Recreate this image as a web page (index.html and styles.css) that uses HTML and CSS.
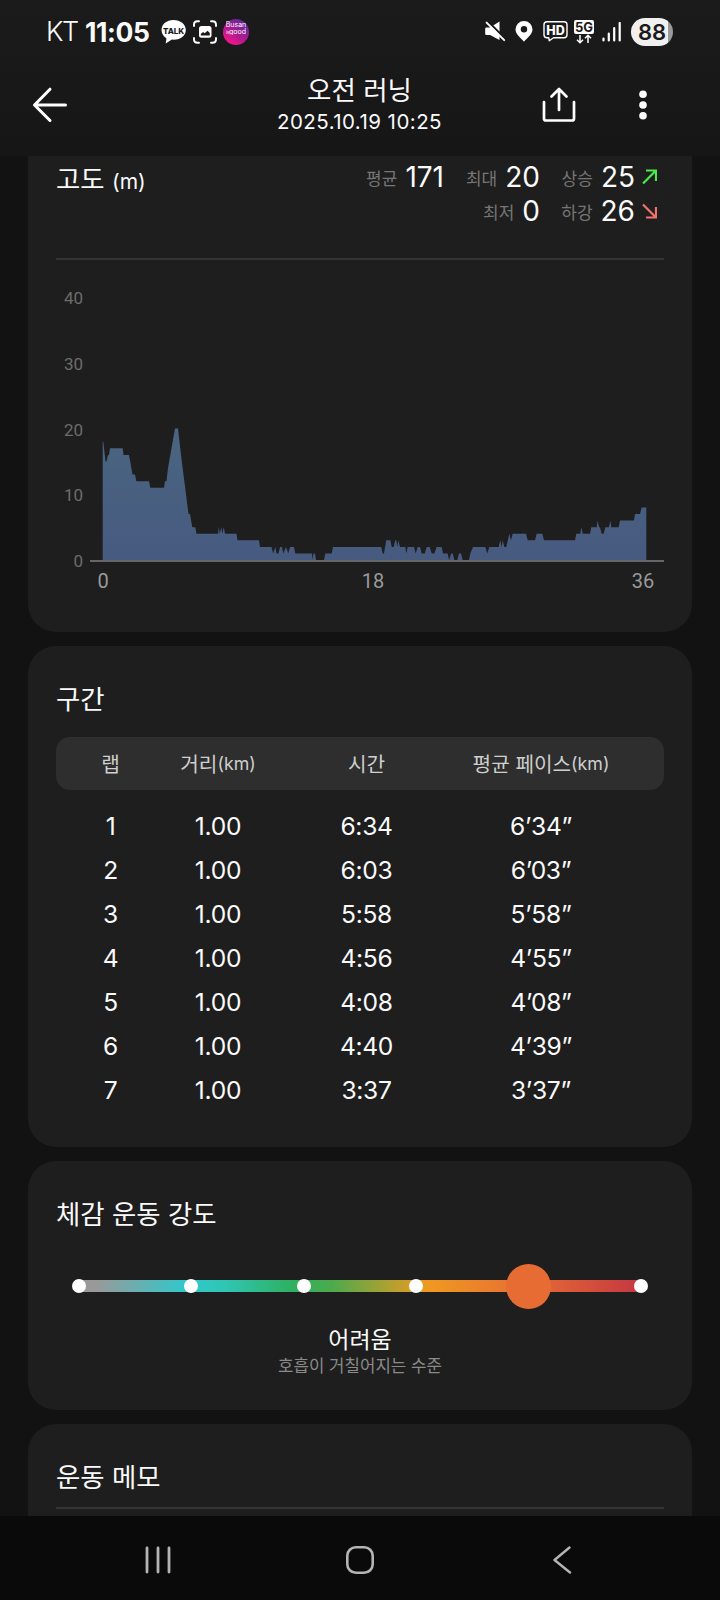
FILE: index.html
```html
<!DOCTYPE html>
<html lang="ko">
<head>
  <meta charset="UTF-8">
  <meta name="viewport" content="width=device-width, initial-scale=1.0">
  <title>오전 러닝</title>
  <link rel="stylesheet" href="styles.css">
</head>
<body>
  <div class="screen">
    <header class="top">
      <div class="status-bar">
        <div class="status-left">
          <span class="carrier">KT</span>
          <span class="clock">11:05</span>
          <svg class="icon-talk" width="25" height="24" viewBox="0 0 25 24">
            <path d="M12.500 0C5.600 0 0.500 4.300 0.500 10c0 3.600 2 6.600 5 8.400L4.700 23.500l6.200-3.900c9 .6 13.900-4 13.900-9.600C24.800 4.300 19.400 0 12.500 0z" fill="#fff"/>
            <text x="12.600" y="13.600" text-anchor="middle" class="talk-text">TALK</text>
          </svg>
          <svg class="icon-capture" width="24" height="24" viewBox="0 0 24 24">
            <path d="M1 6V4.500Q1 1.200 4.500 1.200H6M18 1.200h1.500Q23 1.200 23 4.500V6M23 18v1.500q0 3.300-3.500 3.300H18M6 22.800H4.500Q1 22.800 1 19.500V18" fill="none" stroke="#fff" stroke-width="1.900" stroke-linecap="round"/>
            <rect x="6" y="6" width="12.500" height="11.800" rx="2.500" fill="#fff"/>
            <path d="M7.800 15.500v-1.500l2.300-2 1.500 1.200 3-2.500 2.200 2.300v2.500z" fill="#1a1a1a"/>
          </svg>
          <div class="busan"><span>Busan</span><span><small>is</small>good</span></div>
        </div>
        <div class="status-right">
          <svg class="icon-mute" width="21" height="21" viewBox="0 0 21 21">
            <path d="M1.500 6.500h3.500l9.500-6v18.500L5 14H1.500Q.2 14 .2 12.700V7.800Q.2 6.500 1.500 6.500z" fill="#fff"/>
            <path d="M3.200.8l18 18" stroke="#1a1a1a" stroke-width="2.200"/>
            <path d="M1.600 1.600l17.600 17.600" stroke="#fff" stroke-width="1.900" stroke-linecap="round"/>
          </svg>
          <svg class="icon-pin" width="18" height="21" viewBox="0 0 18 21">
            <path d="M9 0a8.500 8.500 0 0 0-8.500 8.500C.5 13.500 6 17 9 20.700c3-3.700 8.500-7.200 8.500-12.200A8.500 8.500 0 0 0 9 0z" fill="#fff"/>
            <circle cx="9" cy="8.300" r="3.200" fill="#1a1a1a"/>
          </svg>
          <svg class="icon-hd" width="25" height="21" viewBox="0 0 25 21">
            <path d="M4 .8h17q3 0 3 3v10q0 3-3 3H10.500L6.300 19.800 5.800 16.800H4q-3 0-3-3v-10q0-3 3-3z" fill="none" stroke="#fff" stroke-width="1.400" stroke-linejoin="round"/>
            <text x="12.500" y="13.500" text-anchor="middle" class="hd-text">HD</text>
          </svg>
          <svg class="icon-5g" width="20" height="24" viewBox="0 0 20 24">
            <rect x="0" y="0" width="20" height="14" rx="2" fill="#fff"/>
            <text x="10" y="11.900" text-anchor="middle" class="g5-text">5G</text>
            <path d="M6 15v7.500M3 19.800l3 3 3-3M14 23v-7.500M11 18.200l3-3 3 3" fill="none" stroke="#fff" stroke-width="1.500"/>
          </svg>
          <svg class="icon-signal" width="20" height="20" viewBox="0 0 20 20">
            <path d="M1.500 16.500v2M6.800 11.500v7M12.200 6v12.500M17.700 1v17.500" stroke="#fff" stroke-width="2.200" stroke-linecap="round"/>
          </svg>
          <div class="battery">88</div>
        </div>
      </div>
      <div class="app-bar">
        <svg class="icon-back" width="36" height="36" viewBox="0 0 36 36">
          <path d="M18 2.200L2.500 18 18 33.500M2.500 18H33.500" fill="none" stroke="#fff" stroke-width="3" stroke-linecap="round" stroke-linejoin="round"/>
        </svg>
        <div class="title">
          <h1>오전 러닝</h1>
          <p>2025.10.19 10:25</p>
        </div>
        <div class="actions">
          <svg width="34" height="36" viewBox="0 0 34 36">
            <path d="M2 15v16.500q0 2 2 2h26q2 0 2-2V15M17 23V2.500M9.500 9.500L17 2l7.500 7.500" fill="none" stroke="#fff" stroke-width="2.700" stroke-linecap="round" stroke-linejoin="round"/>
          </svg>
          <svg width="8" height="30" viewBox="0 0 8 30">
            <circle cx="4" cy="4.300" r="3.800" fill="#fff"/>
            <circle cx="4" cy="15" r="3.800" fill="#fff"/>
            <circle cx="4" cy="25.700" r="3.800" fill="#fff"/>
          </svg>
        </div>
      </div>
    </header>

    <main class="content">
      <section class="card altitude">
        <div class="altitude-head">
          <h2>고도 <small>(m)</small></h2>
          <div class="stats">
            <div class="stat"><span class="label">평균</span><span class="num">171</span></div>
            <div class="stat"><span class="label">최대</span><span class="num">20</span></div>
            <div class="stat"><span class="label">상승</span><span class="num">25</span></div>
            <svg width="15" height="16" viewBox="0 0 15 16"><path d="M1 14.500L13.500 2M4 1.500h10v10.500" fill="none" stroke="#4be84b" stroke-width="2.200"/></svg>
            <div class="stat second"><span class="label">최저</span><span class="num">0</span></div>
            <div class="stat"><span class="label">하강</span><span class="num">26</span></div>
            <svg width="15" height="16" viewBox="0 0 15 16"><path d="M1 1.500L13.500 14M4 14.500h10V4" fill="none" stroke="#f0726a" stroke-width="2.200"/></svg>
          </div>
        </div>
        <div class="chart">
          <div class="y-axis">
            <span>40</span><span>30</span><span>20</span><span>10</span><span>0</span>
          </div>
          <svg class="plot" width="574" height="266" viewBox="90 0 574 266">
            <defs>
              <linearGradient id="fill" x1="0" y1="0" x2="0" y2="1">
                <stop offset="0" stop-color="#4a6580"/>
                <stop offset="1" stop-color="#475a80"/>
              </linearGradient>
            </defs>
            <polygon id="area" fill="url(#fill)"/>
            <path d="M90 264h574" stroke="#66666a" stroke-width="2"/>
          </svg>
        </div>
        <div class="x-axis"><span>0</span><span>18</span><span>36</span></div>
      </section>

      <section class="card laps">
        <h2>구간</h2>
        <div class="row head">
          <span>랩</span><span>거리<small>(km)</small></span><span>시간</span><span>평균 페이스<small>(km)</small></span>
        </div>
        <div class="rows">
          <div class="row"><span>1</span><span>1.00</span><span>6:34</span><span>6’34”</span></div>
          <div class="row"><span>2</span><span>1.00</span><span>6:03</span><span>6’03”</span></div>
          <div class="row"><span>3</span><span>1.00</span><span>5:58</span><span>5’58”</span></div>
          <div class="row"><span>4</span><span>1.00</span><span>4:56</span><span>4’55”</span></div>
          <div class="row"><span>5</span><span>1.00</span><span>4:08</span><span>4’08”</span></div>
          <div class="row"><span>6</span><span>1.00</span><span>4:40</span><span>4’39”</span></div>
          <div class="row"><span>7</span><span>1.00</span><span>3:37</span><span>3’37”</span></div>
        </div>
      </section>

      <section class="card effort">
        <h2>체감 운동 강도</h2>
        <div class="slider">
          <i></i><i></i><i></i><i></i><i class="thumb"></i><i></i>
        </div>
        <p class="level">어려움</p>
        <p class="desc">호흡이 거칠어지는 수준</p>
      </section>

      <section class="card memo">
        <h2>운동 메모</h2>
      </section>
    </main>

    <nav class="nav-bar">
      <svg width="28" height="28" viewBox="0 0 28 28"><path d="M3 2v24M14 2v24M25 2v24" stroke="#b4b4b4" stroke-width="2.800" stroke-linecap="round"/></svg>
      <svg width="28" height="28" viewBox="0 0 28 28"><rect x="1.300" y="1.300" width="25.400" height="25.400" rx="8.500" fill="none" stroke="#b4b4b4" stroke-width="2.600"/></svg>
      <svg width="28" height="28" viewBox="-5 0 28 28"><path d="M16.500 1.500L1.500 14l15.500 12.500" fill="none" stroke="#b4b4b4" stroke-width="2.400" stroke-linecap="round" stroke-linejoin="round"/></svg>
    </nav>
  </div>

  <script>
    // x position, altitude in meters
    const points = [
      [102.7, 0], [102.7, 18], [103.3, 18], [105.5, 15], [106.5, 15], [108, 16], [109, 16], [110, 17],
      [122.7, 17], [123.5, 16], [129, 16], [132.5, 13], [135, 13], [136.3, 12], [149, 12], [150.3, 11],
      [164, 11], [165, 12], [166.5, 12], [168, 14], [175, 20], [178, 20], [181, 16], [185, 11.2],
      [188.5, 7], [190, 7], [192.3, 5], [195.3, 5], [196.5, 4], [218, 4], [218.8, 5], [219.8, 4],
      [221.3, 5], [222.3, 4], [223.8, 5], [225, 4], [236.5, 4], [237.5, 3], [259, 3], [260, 2],
      [271.5, 2], [273.2, 1], [275.3, 2], [276.5, 1], [278.5, 1], [280, 2], [282, 2], [283.3, 1],
      [286, 2], [288.3, 1], [290, 2], [294, 2], [295.3, 1], [312, 1], [312.7, 0], [313.5, 1],
      [315, 1], [316, 0], [324, 0], [325.3, 1], [331.7, 1], [333, 2], [381.3, 2], [382.7, 1],
      [384, 1], [386.3, 3], [390.3, 3], [391.7, 2], [393.7, 2], [395.3, 3], [396.3, 3], [397.3, 2],
      [398.3, 3], [400, 2], [405.3, 2], [406.3, 1], [407.7, 2], [414, 2], [415.7, 1], [417.7, 2],
      [420, 2], [421.7, 1], [424.7, 1], [426.7, 2], [429.7, 2], [431.7, 1], [434.3, 1], [436.7, 2],
      [441.7, 2], [443, 1], [447.7, 1], [449, 0], [451.3, 1], [452.7, 1], [454.3, 0], [457.3, 0],
      [459, 1], [461, 1], [462.7, 0], [469, 0], [470.3, 1], [473, 2], [485.3, 2], [487.3, 1],
      [489.3, 2], [498.7, 2], [500.3, 3], [501.7, 2], [502.7, 3], [504.3, 2], [506.3, 2], [509.3, 4],
      [511, 3], [512.7, 4], [526, 4], [527.7, 3], [535, 3], [536.7, 4], [542.3, 4], [544, 3],
      [575, 3], [576.3, 4], [580.3, 4], [581.3, 5], [582.7, 4], [590, 4], [591.3, 5], [596.7, 5],
      [597.7, 6], [599, 5], [600, 5], [601.7, 4], [603.7, 4], [605.3, 5], [609, 5], [610.3, 6],
      [611.3, 5], [618.7, 5], [620, 6], [634, 6], [635, 7], [640, 7], [641.7, 8], [646.3, 8], [646.3, 0]
    ];

    const zeroY = 263;
    const meter = 6.57;

    document.getElementById('area').setAttribute('points',
      points.map(([x, m]) => x + ',' + (zeroY - m * meter).toFixed(1)).join(' '));
  </script>
</body>
</html>
```
FILE: styles.css
```css
* {
  box-sizing: border-box;
}

body {
  margin: 0;
  background: #121212;
  color: #fafafa;
  font-family: Inter, "Noto Sans CJK KR", sans-serif;
}

h1, h2, p {
  margin: 0;
  font-weight: 400;
}

svg {
  display: block;
  flex: none;
}

.screen {
  width: 720px;
  height: 1600px;
  display: flex;
  flex-direction: column;
  overflow: hidden;
}

/* status bar + title */
.top {
  height: 156px;
  flex: none;
  background: linear-gradient(#1b1b1b, #161616);
}

.status-bar {
  height: 63px;
  padding: 0 47px 0 46px;
  display: flex;
  justify-content: space-between;
  align-items: center;
}

.status-left,
.status-right {
  display: flex;
  align-items: center;
}

.carrier {
  width: 39px;
  font-size: 27px;
  font-weight: 300;
  letter-spacing: -1.5px;
}

.clock {
  width: 76px;
  font-size: 26.5px;
  font-weight: 700;
  letter-spacing: -0.4px;
}

.talk-text {
  font-size: 8px;
  font-weight: 800;
  fill: #1a1a1a;
}

.icon-capture {
  margin-left: 7px;
}

.busan {
  width: 26px;
  height: 26px;
  margin-left: 6px;
  border-radius: 50%;
  background: linear-gradient(215deg, #5a2a9a 10%, #b01a90 55%, #f5148a 85%);
  display: flex;
  flex-direction: column;
  align-items: center;
  padding-top: 2px;
  font-size: 7px;
  line-height: 7px;
}

.busan span {
  height: 7px;
  overflow: hidden;
}

.busan small {
  font-size: 4px;
}

.icon-pin {
  margin-left: 9px;
}

.icon-hd {
  margin-left: 10px;
}

.hd-text {
  font-size: 12.5px;
  font-weight: 800;
  fill: #fff;
}

.icon-5g {
  margin-left: 6px;
}

.g5-text {
  font-size: 13px;
  font-weight: 700;
  fill: #1a1a1a;
}

.icon-signal {
  margin-left: 8px;
}

.battery {
  width: 42px;
  height: 28px;
  margin-left: 9px;
  border-radius: 14px;
  background: linear-gradient(90deg, #f0f0f0 88%, #9a9a9a 88%);
  color: #1a1a1a;
  font-size: 22px;
  font-weight: 600;
  line-height: 28px;
  text-align: center;
}

.app-bar {
  height: 83px;
  padding: 0 73px 0 32px;
  display: grid;
  grid-template-columns: 1fr 200px 1fr;
  align-items: center;
}

.app-bar .title {
  width: 200px;
  margin-left: 20px;
  text-align: center;
}

.title h1 {
  font-size: 26.5px;
  line-height: 35px;
}

.title p {
  font-size: 20.5px;
  line-height: 28px;
  letter-spacing: 0.45px;
}

.actions {
  display: flex;
  justify-content: flex-end;
  align-items: center;
  gap: 63px;
}

/* cards */
.content {
  flex: 1;
  min-height: 0;
  padding: 0 28px;
  display: flex;
  flex-direction: column;
  gap: 14px;
  overflow: hidden;
}

.card {
  flex: none;
  padding: 0 28px;
  border-radius: 28px;
  background: #1e1e1e;
}

.card h2 {
  font-size: 26.4px;
  line-height: 40px;
}

.altitude {
  height: 476px;
  border-radius: 0 0 28px 28px;
}

.altitude-head {
  height: 104px;
  display: flex;
  justify-content: space-between;
  border-bottom: 2px solid #343434;
}

.altitude h2 {
  padding-top: 3px;
}

.altitude h2 small {
  font-size: 21px;
}

.stats {
  display: grid;
  grid-template-columns: 84px 96px 95px 22px;
  grid-auto-rows: 34px;
  margin: 4px 7px 0 0;
  align-items: center;
}

.stat {
  display: flex;
  justify-content: flex-end;
  align-items: center;
  gap: 8px;
}

.stat.second {
  grid-column: 2;
}

.stat .label {
  font-size: 17px;
  color: #767676;
}

.stat .num {
  font-size: 28px;
}

.stats svg {
  justify-self: end;
}

.chart {
  display: flex;
  justify-content: space-between;
  margin-top: 37px;
}

.y-axis {
  width: 27px;
  height: 283px;
  margin-top: -9px;
  display: flex;
  flex-direction: column;
  justify-content: space-between;
  text-align: right;
  font: 17px/20px Roboto, sans-serif;
  color: #6c6c6c;
}

.x-axis {
  display: flex;
  justify-content: space-between;
  margin: -2px 9px 0 35px;
  font: 20px/24px Roboto, sans-serif;
  color: #9a9a9a;
}

.x-axis span {
  width: 24px;
  text-align: center;
}

/* lap table */
.laps {
  height: 501px;
  padding-top: 33px;
}

.row {
  display: grid;
  grid-template-columns: 109px 106px 191px 158px;
  height: 44px;
  align-items: center;
  text-align: center;
  font-size: 24.6px;
  letter-spacing: -0.3px;
}

.row.head {
  height: 53px;
  margin-top: 18px;
  border-radius: 14px;
  background: #2e2e2e;
  color: #cfcfcf;
  font-size: 20.2px;
  letter-spacing: 0;
}

.row.head span {
  white-space: nowrap;
}

.row small {
  font-size: 17.8px;
  position: relative;
  top: -2px;
}

.rows {
  margin-top: 14px;
}

/* perceived effort */
.effort {
  height: 249px;
  padding-top: 33px;
  text-align: center;
}

.effort h2 {
  text-align: left;
}

.slider {
  height: 12px;
  margin: 46px 15.5px 0;
  display: flex;
  justify-content: space-between;
  align-items: center;
  background: linear-gradient(90deg, #999 3%, #30c8cc 19%, #2fc6b4 26%, #2eb060 38%, #4caa4c 45%, #f09a20 62%, #e66c34 80%, #c83c40 98%) 7px 0 / 562px 12px no-repeat;
}

.slider i {
  width: 14px;
  height: 14px;
  border-radius: 50%;
  background: #fff;
}

.slider .thumb {
  width: 45px;
  height: 45px;
  margin: 0 -15.5px;
  background: #e66c34;
}

.level {
  margin-top: 31px;
  font-size: 23px;
  line-height: 34px;
}

.desc {
  font-size: 16.8px;
  line-height: 18px;
  color: #8a8a8a;
}

/* memo */
.memo {
  height: 140px;
  padding-top: 33px;
}

.memo h2 {
  height: 52px;
  border-bottom: 2px solid #343434;
}

/* system navigation */
.nav-bar {
  height: 84px;
  flex: none;
  padding: 4px 144px 0;
  display: flex;
  justify-content: space-between;
  align-items: center;
  background: #0a0a0a;
}
```
